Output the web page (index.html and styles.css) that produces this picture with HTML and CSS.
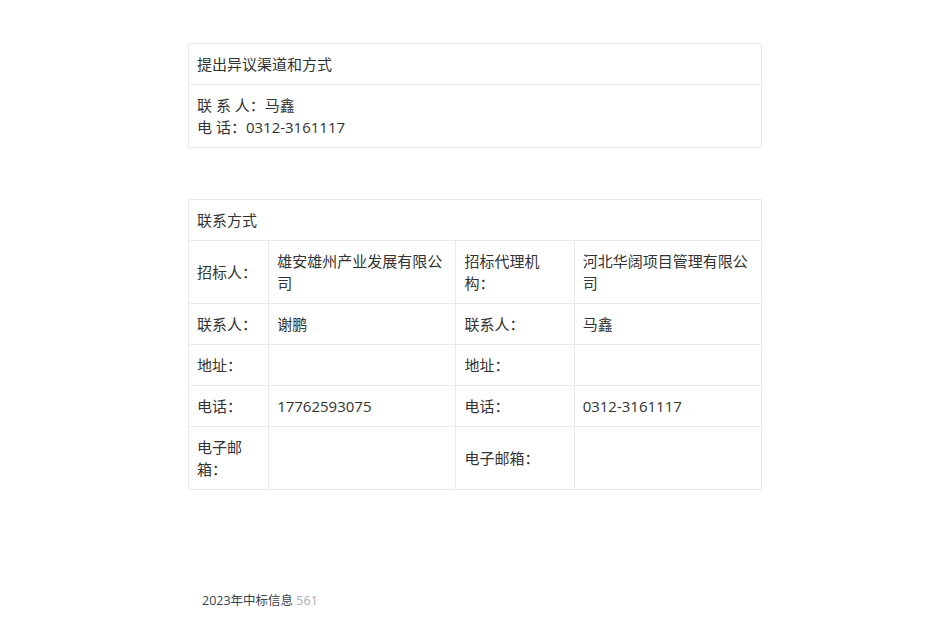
FILE: index.html
```html
<!DOCTYPE html>
<html lang="zh-CN">

<head>
  <meta charset="UTF-8">
  <meta name="viewport" content="width=device-width, initial-scale=1.0">
  <title>联系方式</title>
  <link rel="stylesheet" href="styles.css">
</head>

<body>
  <main class="page">
    <!-- 异议渠道 -->
    <table class="info-table">
      <tr>
        <th>提出异议渠道和方式</th>
      </tr>
      <tr>
        <td>
          联 系 人：马鑫<br>
          电 话：0312-3161117
        </td>
      </tr>
    </table>

    <!-- 联系方式 -->
    <table class="info-table contact-table">
      <colgroup>
        <col class="col-label">
        <col class="col-value">
        <col class="col-label2">
        <col class="col-value">
      </colgroup>
      <tr>
        <th colspan="4">联系方式</th>
      </tr>
      <tr>
        <td>招标人：</td>
        <td>雄安雄州产业发展有限公司</td>
        <td>招标代理机构：</td>
        <td>河北华阔项目管理有限公司</td>
      </tr>
      <tr>
        <td>联系人：</td>
        <td>谢鹏</td>
        <td>联系人：</td>
        <td>马鑫</td>
      </tr>
      <tr>
        <td>地址：</td>
        <td></td>
        <td>地址：</td>
        <td></td>
      </tr>
      <tr>
        <td>电话：</td>
        <td>17762593075</td>
        <td>电话：</td>
        <td>0312-3161117</td>
      </tr>
      <tr>
        <td>电子邮箱：</td>
        <td></td>
        <td>电子邮箱：</td>
        <td></td>
      </tr>
    </table>
  </main>

  <footer class="footer">
    <a href="#">2023年中标信息</a> <span class="count">561</span>
  </footer>
</body>

</html>
```

FILE: styles.css
```css
* {
  box-sizing: border-box;
  margin: 0;
  padding: 0;
}

body {
  background-color: #fff;
  color: #333;
  font-family: "Open Sans", "Noto Sans CJK SC", sans-serif;
  font-size: 15px;
  line-height: 22px;
}

.page {
  width: 574px;
  margin: 0 auto;
  padding-top: 43px;
}

.info-table {
  width: 100%;
  border-collapse: collapse;
  table-layout: fixed;
  margin-bottom: 51px;
}

.info-table th,
.info-table td {
  border: 1px solid #ebebeb;
  padding: 9px 9px 9px 8px;
  text-align: left;
  font-weight: normal;
  vertical-align: middle;
}

.contact-table {
  margin-bottom: 0;
}

.col-label {
  width: 80px;
}

.col-value {
  width: 187px;
}

.col-label2 {
  width: 118px;
}

.footer {
  margin-top: 101px;
  padding-left: 202px;
  font-size: 12.5px;
  line-height: 20px;
}

.footer a {
  color: #3a4250;
  text-decoration: none;
}

.count {
  color: #a9adb3;
}
```
